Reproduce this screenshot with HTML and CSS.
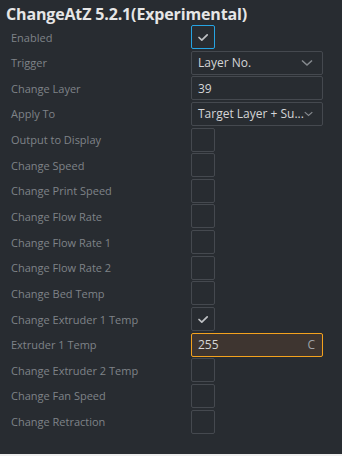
FILE: index.html
```html
<!DOCTYPE html>
<html>
<head>
<meta charset="utf-8">
<link rel="stylesheet" href="styles.css">
</head>
<body>
<div class="panel">
  <div class="title">ChangeAtZ 5.2.1(Experimental)</div>
  <div class="rows">
    <div class="row"><span class="label">Enabled</span><span class="box focus"><svg viewBox="0 0 24 24" width="24" height="24"><polyline points="8,12.5 10.8,15.2 16.2,9.8" class="tick"/></svg></span></div>
    <div class="row"><span class="label">Trigger</span><span class="field select"><span class="val">Layer No.</span><svg class="chev" viewBox="0 0 12 8" width="12" height="8"><polyline points="1,1.5 6,6 11,1.5"/></svg></span></div>
    <div class="row"><span class="label">Change Layer</span><span class="field"><span class="val">39</span></span></div>
    <div class="row"><span class="label">Apply To</span><span class="field select"><span class="val">Target Layer + Su...</span><svg class="chev" viewBox="0 0 12 8" width="12" height="8"><polyline points="1,1.5 6,6 11,1.5"/></svg></span></div>
    <div class="row"><span class="label">Output to Display</span><span class="box"></span></div>
    <div class="row"><span class="label">Change Speed</span><span class="box"></span></div>
    <div class="row"><span class="label">Change Print Speed</span><span class="box"></span></div>
    <div class="row"><span class="label">Change Flow Rate</span><span class="box"></span></div>
    <div class="row"><span class="label">Change Flow Rate 1</span><span class="box"></span></div>
    <div class="row"><span class="label">Change Flow Rate 2</span><span class="box"></span></div>
    <div class="row"><span class="label">Change Bed Temp</span><span class="box"></span></div>
    <div class="row"><span class="label">Change Extruder 1 Temp</span><span class="box"><svg viewBox="0 0 24 24" width="24" height="24"><polyline points="8,12.5 10.8,15.2 16.2,9.8" class="tick"/></svg></span></div>
    <div class="row"><span class="label">Extruder 1 Temp</span><span class="field active"><span class="val">255</span><span class="unit">C</span></span></div>
    <div class="row"><span class="label">Change Extruder 2 Temp</span><span class="box"></span></div>
    <div class="row"><span class="label">Change Fan Speed</span><span class="box"></span></div>
    <div class="row"><span class="label">Change Retraction</span><span class="box"></span></div>
  </div>
</div>
</body>
</html>
```
FILE: styles.css
```css
html, body {
  margin: 0;
  padding: 0;
  background: #f0f0f0;
}
body {
  width: 342px;
  height: 456px;
  font-family: "Open Sans", "Noto Sans", sans-serif;
}
.panel {
  background: #282c31;
  height: 454px;
  box-sizing: border-box;
  padding: 4px 0 0 0;
}
.title {
  color: #e6e6e6;
  font-weight: bold;
  font-size: 16px;
  line-height: 21px;
  padding-left: 6px;
  letter-spacing: -0.15px;
}
.rows {
  display: flex;
  flex-direction: column;
  gap: 1.65px;
}
.row {
  display: grid;
  grid-template-columns: 180px 132px;
  align-items: center;
  height: 24px;
  padding-left: 11px;
}
.label {
  color: #7f8388;
  font-size: 11px;
}
.box {
  width: 24px;
  height: 24px;
  box-sizing: border-box;
  border: 1px solid #45494f;
  border-radius: 2px;
  display: flex;
  align-items: center;
  justify-content: center;
}
.box svg {
  margin: -1px;
}
.box.focus {
  border-color: #26a4e3;
}
.tick {
  fill: none;
  stroke: #bfc1c4;
  stroke-width: 1.7;
  stroke-linecap: round;
  stroke-linejoin: round;
}
.field {
  height: 24px;
  box-sizing: border-box;
  border: 1px solid #45494f;
  border-radius: 2px;
  display: flex;
  align-items: center;
  padding: 0 8px 0 6px;
  color: #d4d5d7;
  font-size: 12px;
}
.val {
  flex: 1;
  white-space: nowrap;
}
.chev {
  fill: none;
  stroke: #85898e;
  stroke-width: 1.6;
  margin-right: 1px;
}
.field.active {
  background: #3e3530;
  border-color: #f4a21e;
}
.unit {
  color: #9fa3a8;
  font-size: 12px;
  margin-right: -1px;
}
```
